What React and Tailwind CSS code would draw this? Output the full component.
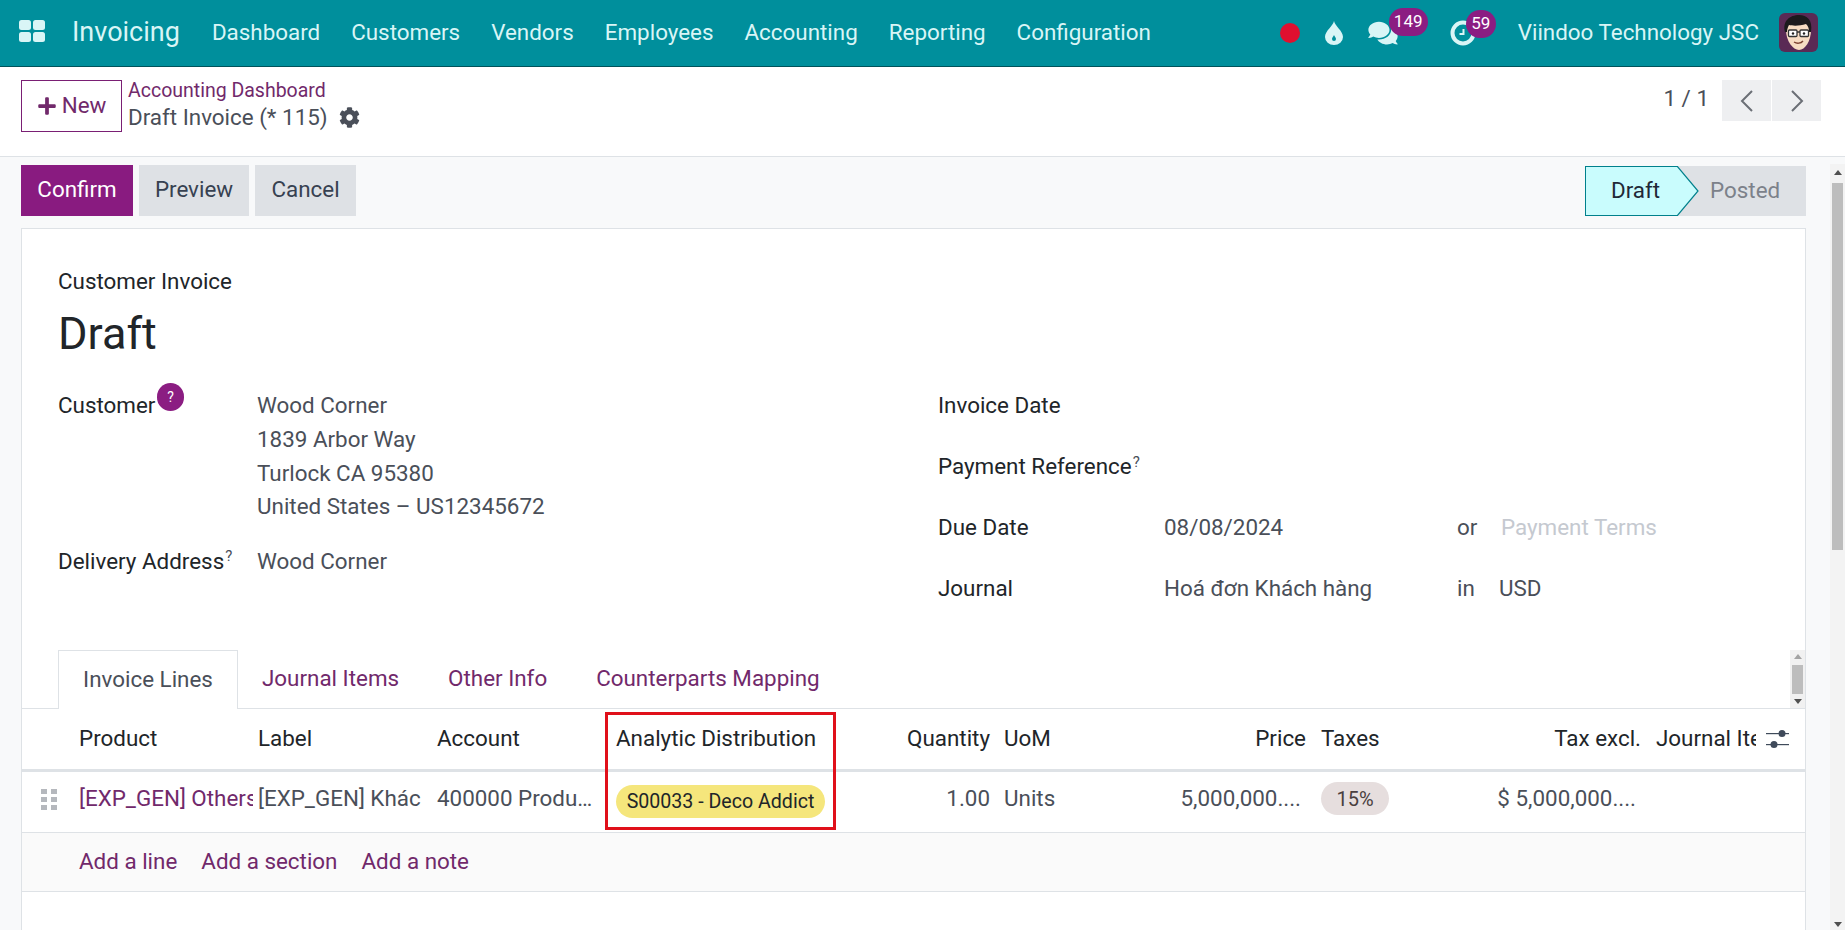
import React from "react";
import { FaPlus, FaCog, FaComments } from "react-icons/fa";

const navItems = ["Dashboard", "Customers", "Vendors", "Employees", "Accounting", "Reporting", "Configuration"];
const lineCols = "grid-cols-[57px_179px_179px_179px_222px_152px_14px_302px_15px_320px_15px_100px_33px]";

function Avatar() {
  return (
    <svg viewBox="0 0 39 39" className="w-[39px] h-[39px] rounded-md">
      <rect width="39" height="39" fill="#5a2a55" />
      <path d="M7 17c0-8 6-11 13-11s12 4 12 11c0 11-6 20-12 20S7 28 7 17z" fill="#f7dcc3" />
      <path d="M6 19C3 8 11 2 20 2c8 0 14 5 12 17l-2 0c0-4-1-6-3-8-6 2-13 2-17 1-1 2-2 4-2 7z" fill="#1c1a1d" />
      <rect x="9.500" y="17" width="8.500" height="6.500" rx="1" fill="#fff" stroke="#333" strokeWidth="1.300" />
      <rect x="21" y="17" width="8.500" height="6.500" rx="1" fill="#fff" stroke="#333" strokeWidth="1.300" />
      <path d="M18 19h3" stroke="#333" strokeWidth="1.300" />
      <circle cx="14" cy="20.500" r="1.200" fill="#222" />
      <circle cx="25" cy="20.500" r="1.200" fill="#222" />
      <path d="M15 29c3 2 7 1.500 9-1" stroke="#7a4030" strokeWidth="1.300" fill="none" />
    </svg>
  );
}

function Header() {
  return (
    <header className="h-[67px] shrink-0 flex items-center bg-[#008f9c] border-b border-[#00535b] text-[#d9f5f6] text-[22.4px] pl-[19px] pr-[27px] pb-px">
      <svg viewBox="0 0 26 22" className="w-[26px] h-[22px] fill-[#d9f5f6] -mt-[3px]">
        <rect x="0" y="0" width="12" height="10" rx="2.500" />
        <rect x="14" y="0" width="12" height="10" rx="2.500" />
        <rect x="0" y="12" width="12" height="10" rx="2.500" />
        <rect x="14" y="12" width="12" height="10" rx="2.500" />
      </svg>
      <span className="ml-[27px] text-[27px] leading-none">Invoicing</span>
      <nav className="flex gap-[31px] ml-[32px]">
        {navItems.map((n) => <span key={n}>{n}</span>)}
      </nav>
      <div className="ml-auto flex items-center">
        <span className="w-5 h-5 rounded-full bg-[#e0102f]" />
        <svg viewBox="0 0 18 24" className="ml-[25px] w-[18px] h-[24px]">
          <path d="M9 0C10 5 18 10 18 16a9 8 0 0 1-18 0C0 10 8 5 9 0z" fill="#d9f5f6" />
          <path d="M9 14c.5 1.500 2 2.500 2 4a2 2 0 0 1-4 0c0-1.500 1.500-2.500 2-4z" fill="#008f9c" />
        </svg>
        <span className="relative ml-[25px] w-[30px]">
          <FaComments className="w-[30px] h-[26px]" />
          <span className="absolute -top-[12px] left-[21px] w-[39px] h-[28px] rounded-full bg-[#8b1d82] text-white text-[17px] flex items-center justify-center">149</span>
        </span>
        <span className="relative ml-[52px] w-[26px]">
          <svg viewBox="0 0 26 26" className="w-[26px] h-[26px]" fill="none" stroke="#d9f5f6" strokeWidth="4">
            <circle cx="13" cy="13" r="10.500" />
            <path d="M13.500 9v5h-4" strokeWidth="2" />
          </svg>
          <span className="absolute -top-[10px] left-[16px] w-[30px] h-[28px] rounded-full bg-[#8b1d82] text-white text-[17px] flex items-center justify-center">59</span>
        </span>
        <span className="ml-[42px]">Viindoo Technology JSC</span>
        <span className="ml-[20px] flex"><Avatar /></span>
      </div>
    </header>
  );
}

function PagerButton({ d, className = "" }) {
  return (
    <button className={`w-[49px] h-[41px] bg-[#eeeff1] flex items-center justify-center ${className}`}>
      <svg viewBox="0 0 18 24" className="w-[18px] h-[24px]" fill="none" stroke="#6b6f76" strokeWidth="2">
        <path d={d} />
      </svg>
    </button>
  );
}

function ControlPanel() {
  return (
    <div className="h-[90px] shrink-0 bg-white border-b border-[#dee2e6] flex pl-[21px] pr-[24px] pt-[13px]">
      <button className="w-[101px] h-[52px] border border-[#7a1f74] text-[#71296b] flex items-center justify-center gap-[5px]">
        <FaPlus className="w-5 h-5" />
        <span>New</span>
      </button>
      <div className="ml-[6px] -mt-[3px] flex flex-col">
        <span className="text-[#71296b] text-[19.5px] leading-[27px]">Accounting Dashboard</span>
        <span className="flex items-center text-[#4a4f59] leading-[27px]">
          Draft Invoice (* 115)
          <FaCog className="ml-[11px] w-[21px] h-[21px]" />
        </span>
      </div>
      <div className="ml-auto flex items-start">
        <span className="text-[#4a4f59] mt-[2px] mr-[13px]">1 / 1</span>
        <PagerButton d="M14 2L4 12l10 10" />
        <PagerButton d="M4 2l10 10L4 22" className="ml-px" />
      </div>
    </div>
  );
}

function ActionBar() {
  return (
    <div className="flex items-start pt-[8px] h-[71px]">
      <button className="w-[112px] h-[51px] pb-[2px] bg-[#891b80] text-white">Confirm</button>
      <button className="w-[110px] h-[51px] pb-[2px] ml-[6px] bg-[#dee1e5] text-[#374151]">Preview</button>
      <button className="w-[101px] h-[51px] pb-[2px] ml-[6px] bg-[#dee1e5] text-[#374151]">Cancel</button>
      <div className="ml-auto flex h-[50px] mt-px">
        <div className="relative w-[93px] bg-[#c9fcfd] border border-r-0 border-[#00808c] flex items-center pl-[25px] text-[#1f2937]">
          Draft
          <svg viewBox="0 0 22 50" className="absolute left-[91px] -top-px w-[22px] h-[50px] z-10">
            <path d="M0 0L21 25L0 50" fill="#c9fcfd" stroke="#00808c" strokeWidth="1.200" />
          </svg>
        </div>
        <div className="w-[128px] bg-[#dee1e5] text-[#7c818a] flex items-center pl-[32px]">Posted</div>
      </div>
    </div>
  );
}

function Field({ label, sup }) {
  return (
    <div className="flex">
      <span className="text-[#212529] whitespace-nowrap">{label}{sup && <sup className="text-[15px] text-[#4a4f59] ml-px">?</sup>}</span>
    </div>
  );
}

function FormTop() {
  return (
    <div className="flex pl-[36px] leading-[33px]">
      <div className="w-[880px]">
        <div className="relative h-[33px]">
          <span className="text-[#212529]">Customer</span>
          <span className="absolute left-[99px] -top-[6px] w-[27px] h-[28px] rounded-full bg-[#8b1d82] text-white text-[14px] leading-none flex items-center justify-center">?</span>
          <span className="absolute left-[199px] text-[#4a4f59]">Wood Corner</span>
        </div>
        <div className="pl-[199px] text-[#4a4f59] leading-[33.5px] mt-[1px]">
          <div>1839 Arbor Way</div>
          <div>Turlock CA 95380</div>
          <div>United States – US12345672</div>
        </div>
        <div className="relative mt-[21px]">
          <Field label="Delivery Address" sup />
          <span className="absolute left-[199px] top-0 text-[#4a4f59]">Wood Corner</span>
        </div>
      </div>
      <div className="flex flex-col gap-[28px]">
        <Field label="Invoice Date" />
        <Field label="Payment Reference" sup />
        <div className="grid grid-cols-[226px_293px_44px_auto]">
          <span className="text-[#212529]">Due Date</span>
          <span className="text-[#4a4f59]">08/08/2024</span>
          <span className="text-[#4a4f59]">or</span>
          <span className="text-[#c5c9d0]">Payment Terms</span>
        </div>
        <div className="grid grid-cols-[226px_293px_42px_auto]">
          <span className="text-[#212529]">Journal</span>
          <span className="text-[#4a4f59]">Hoá đơn Khách hàng</span>
          <span className="text-[#4a4f59]">in</span>
          <span className="text-[#4a4f59]">USD</span>
        </div>
      </div>
    </div>
  );
}

function Tabs() {
  return (
    <div className="relative h-[59px] mt-[45px] border-b border-[#dee2e6] flex pl-[36px]">
      <div className="h-[59px] w-[180px] bg-white border border-b-0 border-[#dee2e6] flex items-center justify-center text-[#4a4f59]">Invoice Lines</div>
      <div className="flex items-center gap-[49px] pl-[24px] text-[#71296b]">
        <span>Journal Items</span>
        <span>Other Info</span>
        <span>Counterparts Mapping</span>
      </div>
      <div className="ml-auto w-[15px] h-[58px] bg-[#f1f1f1] flex flex-col items-center justify-between py-[4px]">
        <span className="w-0 h-0 border-x-[4px] border-x-transparent border-b-[5px] border-b-[#a3a3a3]" />
        <span className="w-[11px] h-[29px] bg-[#bdbdbd]" />
        <span className="w-0 h-0 border-x-[4px] border-x-transparent border-t-[5px] border-t-[#505050]" />
      </div>
    </div>
  );
}

function LinesTable() {
  return (
    <div className="relative">
      <div className={`grid ${lineCols} h-[63px] items-center border-b-[3px] border-[#dee2e6] text-[#212529]`}>
        <span />
        <span>Product</span>
        <span>Label</span>
        <span>Account</span>
        <span>Analytic Distribution</span>
        <span className="text-right -ml-[20px]">Quantity</span>
        <span />
        <span className="whitespace-nowrap flex justify-between"><span>UoM</span><span>Price</span></span>
        <span />
        <span className="whitespace-nowrap flex justify-between"><span>Taxes</span><span>Tax excl.</span></span>
        <span />
        <span className="overflow-hidden whitespace-nowrap">Journal Items</span>
        <span className="pl-[10px]">
          <svg viewBox="0 0 23 20" className="w-[23px] h-[20px]" fill="#3f4a5a">
            <rect x="0" y="4" width="23" height="1.200" />
            <circle cx="16" cy="4.500" r="3.500" />
            <rect x="0" y="15" width="23" height="1.200" />
            <circle cx="8" cy="15.500" r="3.500" />
          </svg>
        </span>
      </div>
      <div className={`grid ${lineCols} h-[61px] pb-[6px] items-center border-b border-[#dee2e6] text-[#4a4f59]`}>
        <span className="pl-[19px] grid grid-cols-2 w-[35px] gap-y-[3px] gap-x-[4px]">
          {[0, 1, 2, 3, 4, 5].map((i) => <span key={i} className="w-[6px] h-[5px] bg-[#b5b8bd]" />)}
        </span>
        <span className="text-[#71296b] overflow-hidden whitespace-nowrap pr-[5px]">
          <span className="block overflow-hidden">[EXP_GEN] Others</span>
        </span>
        <span className="overflow-hidden whitespace-nowrap">[EXP_GEN] Khác</span>
        <span className="overflow-hidden whitespace-nowrap text-ellipsis pr-[14px]">400000 Product Sales</span>
        <span className="flex"><span className="h-[33px] w-[209px] mt-[5px] rounded-full bg-[#f5e67c] text-[#212529] text-[19.6px] flex items-center justify-center">S00033 - Deco Addict</span></span>
        <span className="text-right -ml-[20px]">1.00</span>
        <span />
        <span className="flex justify-between whitespace-nowrap"><span>Units</span><span className="pr-[5px]">5,000,000....</span></span>
        <span />
        <span className="flex justify-between items-center whitespace-nowrap">
          <span className="h-[33px] w-[68px] rounded-full bg-[#e6dede] text-[#4a3f3f] text-[20px] flex items-center justify-center">15%</span>
          <span className="pr-[5px]">$ 5,000,000....</span>
        </span>
      </div>
      <div className="h-[59px] bg-[#fafafa] border-b border-[#dee2e6] flex items-center gap-[24px] pl-[57px] text-[#71296b]">
        <span>Add a line</span>
        <span>Add a section</span>
        <span>Add a note</span>
      </div>
      {/* red highlight added on the screenshot */}
      <div className="absolute left-[583px] top-[3px] w-[231px] h-[118px] border-[3px] border-[#e0101a]" />
    </div>
  );
}

export default function App() {
  return (
    <div className="h-[930px] flex flex-col overflow-hidden bg-[#f8f9fa] text-[22.4px] font-['Roboto',sans-serif]">
      <Header />
      <ControlPanel />
      <div className="flex-1 flex min-h-0">
        <div className="flex-1 min-w-0 flex flex-col pl-[21px] pr-[24px]">
          <ActionBar />
          <div className="flex-1 bg-white border border-b-0 border-[#dee2e6]">
            <div className="pl-[36px] pt-[36px] text-[#212529] leading-[33px]">Customer Invoice</div>
            <div className="pl-[36px] text-[45px] leading-[52px] text-[#212529] mt-[10px] mb-[29px]">Draft</div>
            <FormTop />
            <Tabs />
            <LinesTable />
          </div>
        </div>
        <div className="w-[15px] mt-[7px] bg-[#f3f3f3] flex flex-col items-center pt-[6px] pb-[3px]">
          <span className="w-0 h-0 border-x-[4px] border-x-transparent border-b-[5px] border-b-[#505050]" />
          <span className="w-[11px] h-[367px] bg-[#bdbdbd] mt-[8px]" />
          <span className="flex-1" />
          <span className="w-0 h-0 border-x-[4px] border-x-transparent border-t-[5px] border-t-[#505050]" />
        </div>
      </div>
    </div>
  );
}
